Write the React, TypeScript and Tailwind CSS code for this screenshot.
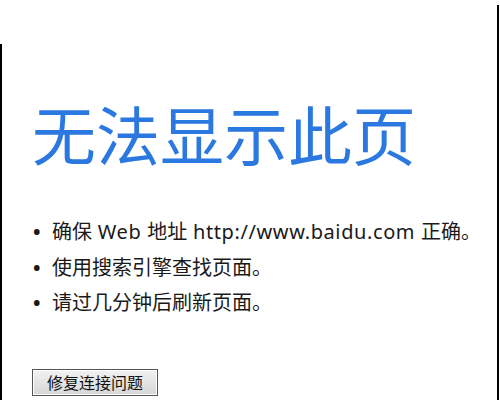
export default function App() {
  return (
    <div
      className="flex h-[400px] w-[500px] overflow-hidden bg-white text-[#1a1a1a]"
      style={{ fontFamily: '"Noto Sans", "Noto Sans CJK SC", sans-serif' }}
    >
      <div className="mt-[44px] w-[2px] shrink-0 bg-black" />
      <main className="flex-1 pl-[30px]">
        <h1
          className="mt-[88px] text-[64px] leading-[88px] font-normal text-[#2b79e0]"
          style={{ fontFamily: '"Noto Sans CJK SC", sans-serif' }}
        >
          无法显示此页
        </h1>
        <ul className="mt-[38px] text-[20px] leading-[35.5px]">
          <li className="flex">
            <span className="w-[20px] pl-[1px] font-bold">•</span>
            <span>
              确保<span className="tracking-[0.6px]"> Web </span>地址
              <span className="tracking-[0.6px]"> http://www.baidu.com </span>正确。
            </span>
          </li>
          <li className="flex">
            <span className="w-[20px] pl-[1px] font-bold">•</span>
            <span>使用搜索引擎查找页面。</span>
          </li>
          <li className="flex">
            <span className="w-[20px] pl-[1px] font-bold">•</span>
            <span>请过几分钟后刷新页面。</span>
          </li>
        </ul>
        <button
          className="mt-[48px] h-[27px] w-[126px] border border-[#555] bg-gradient-to-b from-[#f2f2f2] to-[#d6d6d6] text-[16px] leading-[23px] text-[#111] shadow-[inset_0_0_0_1px_#fff]"
          style={{ fontFamily: '"Noto Sans CJK SC", sans-serif' }}
        >
          修复连接问题
        </button>
      </main>
      <div className="mt-[5px] mr-[1px] w-[2px] shrink-0 bg-black" />
    </div>
  );
}
